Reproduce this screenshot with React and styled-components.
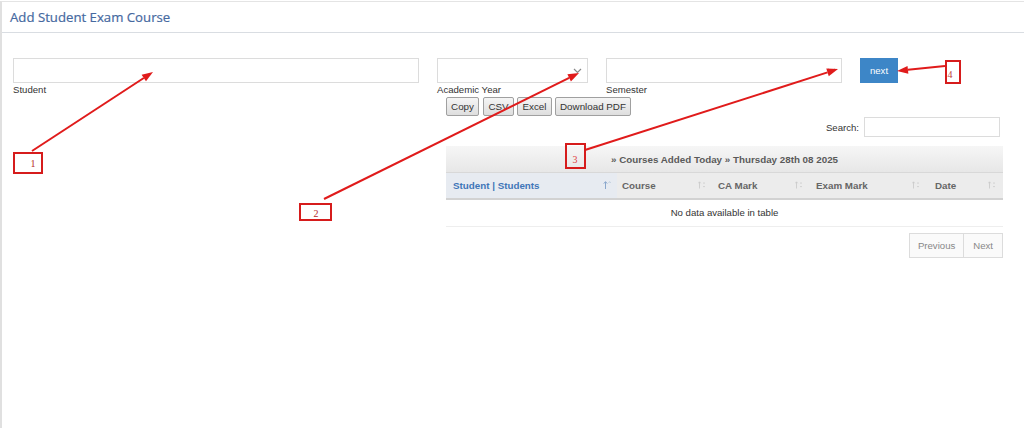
import React from "react";
import styled, { createGlobalStyle } from "styled-components";

const GlobalStyle = createGlobalStyle`
  html, body {
    margin: 0;
    padding: 0;
    background: #fff;
    overflow: hidden;
  }
  body {
    font-family: "Liberation Sans", Arial, sans-serif;
    color: #333;
  }
`;

const Page = styled.div`
  position: relative;
  margin-top: 1px;
  height: 427px;
  border-top: 1px solid #e4e4e4;
  border-left: 2px solid #e0e0e0;
  box-sizing: border-box;
`;

const Header = styled.div`
  height: 31px;
  display: flex;
  align-items: center;
  padding-left: 8px;
  border-bottom: 1px solid #d9dde2;
  box-sizing: border-box;
`;

const Title = styled.h1`
  margin: 0;
  font-family: "Open Sans", sans-serif;
  font-size: 13.2px;
  font-weight: 400;
  color: #46699f;
  -webkit-text-stroke: 0.2px #46699f;
`;

const Content = styled.div`
  padding: 25px 0 0 11px;
`;

const FormRow = styled.div`
  display: flex;
  gap: 18px;
  align-items: flex-start;
`;

const Field = styled.div`
  width: ${(p) => p.$width};
  display: flex;
  flex-direction: column;
`;

const TextInput = styled.div`
  height: 25px;
  border: 1px solid #dcdcdc;
  box-sizing: border-box;
  background: #fff;
`;

const SelectBox = styled(TextInput)`
  display: flex;
  align-items: center;
  justify-content: flex-end;
  padding-right: 5px;
`;

const Label = styled.span`
  margin-top: 1px;
  font-size: 9.6px;
  line-height: 12px;
  color: #333;
`;

const NextButton = styled.button`
  width: 38px;
  height: 25px;
  border: none;
  background: #3d86c7;
  color: #fff;
  font-family: "Liberation Sans", Arial, sans-serif;
  font-size: 9.6px;
  padding: 0;
`;

const Results = styled.div`
  margin-left: 433px;
  width: 557px;
  margin-top: 1px;
`;

const Toolbar = styled.div`
  display: flex;
  gap: 3px;
  height: 19px;
`;

const ToolButton = styled.button`
  height: 19px;
  padding: 0 4px;
  border: 1px solid #a0a0a0;
  border-radius: 2px;
  background: linear-gradient(#f5f5f5, #dedede);
  font-family: "Liberation Sans", Arial, sans-serif;
  font-size: 9.8px;
  color: #333;
  width: ${(p) => p.$width};
  margin-left: ${(p) => p.$shift || "0"};
`;

const SearchRow = styled.div`
  display: flex;
  justify-content: flex-end;
  align-items: center;
  gap: 5px;
  padding-right: 3px;
  margin-top: 1px;
  font-size: 9.6px;
  color: #333;
`;

const SearchInput = styled.div`
  width: 136px;
  height: 20px;
  border: 1px solid #dcdcdc;
  box-sizing: border-box;
`;

const Table = styled.table`
  margin-top: 9px;
  width: 557px;
  border-collapse: collapse;
  table-layout: fixed;
  font-size: 9.6px;
`;

const CaptionCell = styled.th`
  height: 26px;
  padding: 0;
  background: linear-gradient(#f6f6f6, #e7e7e7);
  color: #5a5a5a;
  font-weight: 700;
  font-size: 9.8px;
  text-align: center;
  border-bottom: 1px solid #d8d8d8;
`;

const HeadCell = styled.th`
  position: relative;
  height: 26px;
  padding: 0 0 0 ${(p) => p.$pad};
  text-align: left;
  font-weight: 700;
  font-size: 9.8px;
  color: ${(p) => (p.$active ? "#3f76b8" : "#666")};
  background: ${(p) => (p.$active ? "#e7ebf1" : "#ececec")};
  border-bottom: 2px solid #d2d2d2;
  box-sizing: border-box;
`;

const SortIcon = styled.svg`
  position: absolute;
  right: ${(p) => (p.$active ? "6px" : "7px")};
  top: 7px;
`;

const EmptyCell = styled.td`
  height: 26px;
  text-align: center;
  color: #333;
  border-bottom: 1px solid #eee;
  padding: 0;
`;

const Pager = styled.div`
  display: flex;
  justify-content: flex-end;
  margin-top: 6px;
`;

const PageButton = styled.div`
  height: 23px;
  padding: 0 ${(p) => p.$pad};
  display: flex;
  align-items: center;
  border: 1px solid #dcdcdc;
  margin-left: -1px;
  color: #888;
  font-size: 9.6px;
  background: #fafafa;
`;

const Overlay = styled.svg`
  position: absolute;
  left: -2px;
  top: -2px;
  pointer-events: none;
`;

const Chevron = () => (
  <svg width="9" height="6" viewBox="0 0 9 6">
    <path d="M1 1 L4.5 4.5 L8 1" fill="none" stroke="#888" strokeWidth="1.2" />
  </svg>
);

const Sort = ({ active }) => (
  <SortIcon $active={active} width="8" height="10" viewBox="0 0 8 10">
    {active ? (
      <>
        <path d="M2.5 9 V2 M0.8 3.6 L2.5 1.6 L4.2 3.6" fill="none" stroke="#8aa7cc" strokeWidth="1" />
        <path d="M5.5 3 L6.6 1.6 L7.7 3" fill="none" stroke="#b8c6d8" strokeWidth="0.8" />
      </>
    ) : (
      <>
        <path d="M1.5 8.5 V2 M0.3 3.3 L1.5 1.8 L2.7 3.3" fill="none" stroke="#c8c8c8" strokeWidth="0.8" />
        <path d="M5 3.5 L6 2 L7 3.5 Z M5 6 L6 7.5 L7 6 Z" fill="#c8c8c8" />
      </>
    )}
  </SortIcon>
);

const Arrow = ({ x1, y1, x2, y2 }) => {
  const a = Math.atan2(y2 - y1, x2 - x1);
  const len = 11;
  const w = 4;
  const bx = x2 - len * Math.cos(a);
  const by = y2 - len * Math.sin(a);
  const px = -Math.sin(a) * w;
  const py = Math.cos(a) * w;
  return (
    <g>
      <line x1={x1} y1={y1} x2={bx} y2={by} stroke="#e01b1b" strokeWidth="2" />
      <polygon
        points={`${x2},${y2} ${bx + px},${by + py} ${bx - px},${by - py}`}
        fill="#e01b1b"
      />
    </g>
  );
};

const Marker = ({ x, y, w, h, n, tx, ty, color }) => (
  <g>
    <rect x={x} y={y} width={w} height={h} fill="none" stroke="#d61c1c" strokeWidth="2" />
    <text
      x={tx}
      y={ty}
      fontFamily="'Liberation Serif', serif"
      fontSize="10"
      fill={color}
      textAnchor="middle"
    >
      {n}
    </text>
  </g>
);

const columns = [
  { label: "Student | Students", width: 171, pad: "7px", active: true },
  { label: "Course", width: 96, pad: "5px" },
  { label: "CA Mark", width: 97, pad: "5px" },
  { label: "Exam Mark", width: 117, pad: "6px" },
  { label: "Date", width: 76, pad: "8px" },
];

export default function App() {
  return (
    <>
      <GlobalStyle />
      <Page>
        <Header>
          <Title>Add Student Exam Course</Title>
        </Header>
        <Content>
          <FormRow>
            <Field $width="406px">
              <TextInput />
              <Label>Student</Label>
            </Field>
            <Field $width="151px">
              <SelectBox>
                <Chevron />
              </SelectBox>
              <Label>Academic Year</Label>
            </Field>
            <Field $width="236px">
              <SelectBox>
                <Chevron />
              </SelectBox>
              <Label>Semester</Label>
            </Field>
            <NextButton>next</NextButton>
          </FormRow>

          <Results>
            <Toolbar>
              <ToolButton $width="33px">Copy</ToolButton>
              <ToolButton $width="31px" $shift="1px">CSV</ToolButton>
              <ToolButton $width="35px">Excel</ToolButton>
              <ToolButton $width="76px">Download PDF</ToolButton>
            </Toolbar>
            <SearchRow>
              <span>Search:</span>
              <SearchInput />
            </SearchRow>

            <Table>
              <colgroup>
                {columns.map((c) => (
                  <col key={c.label} style={{ width: c.width }} />
                ))}
              </colgroup>
              <thead>
                <tr>
                  <CaptionCell colSpan={5}>
                    » Courses Added Today » Thursday 28th 08 2025
                  </CaptionCell>
                </tr>
                <tr>
                  {columns.map((c) => (
                    <HeadCell key={c.label} $active={c.active} $pad={c.pad}>
                      {c.label}
                      <Sort active={c.active} />
                    </HeadCell>
                  ))}
                </tr>
              </thead>
              <tbody>
                <tr>
                  <EmptyCell colSpan={5}>No data available in table</EmptyCell>
                </tr>
              </tbody>
            </Table>

            <Pager>
              <PageButton $pad="8px">Previous</PageButton>
              <PageButton $pad="9px">Next</PageButton>
            </Pager>
          </Results>
        </Content>

        <Overlay width="1024" height="428" viewBox="0 0 1024 428">
          <Arrow x1={32} y1={151} x2={153} y2={72} />
          <Marker x={14} y={153} w={28} h={20} n="1" tx={33} ty={167} color="#b52a2a" />

          <Arrow x1={324} y1={199} x2={579} y2={73} />
          <Marker x={300} y={204} w={31} h={16} n="2" tx={316} ty={217} color="#b52a2a" />

          <Arrow x1={585} y1={150} x2={838} y2={69} />
          <Marker x={566} y={144} w={19} h={24} n="3" tx={575} ty={163} color="#e04040" />

          <Arrow x1={945} y1={66} x2={897} y2={71} />
          <Marker x={946} y={61} w={14} h={22} n="4" tx={950} ty={78} color="#c04040" />
        </Overlay>
      </Page>
    </>
  );
}
